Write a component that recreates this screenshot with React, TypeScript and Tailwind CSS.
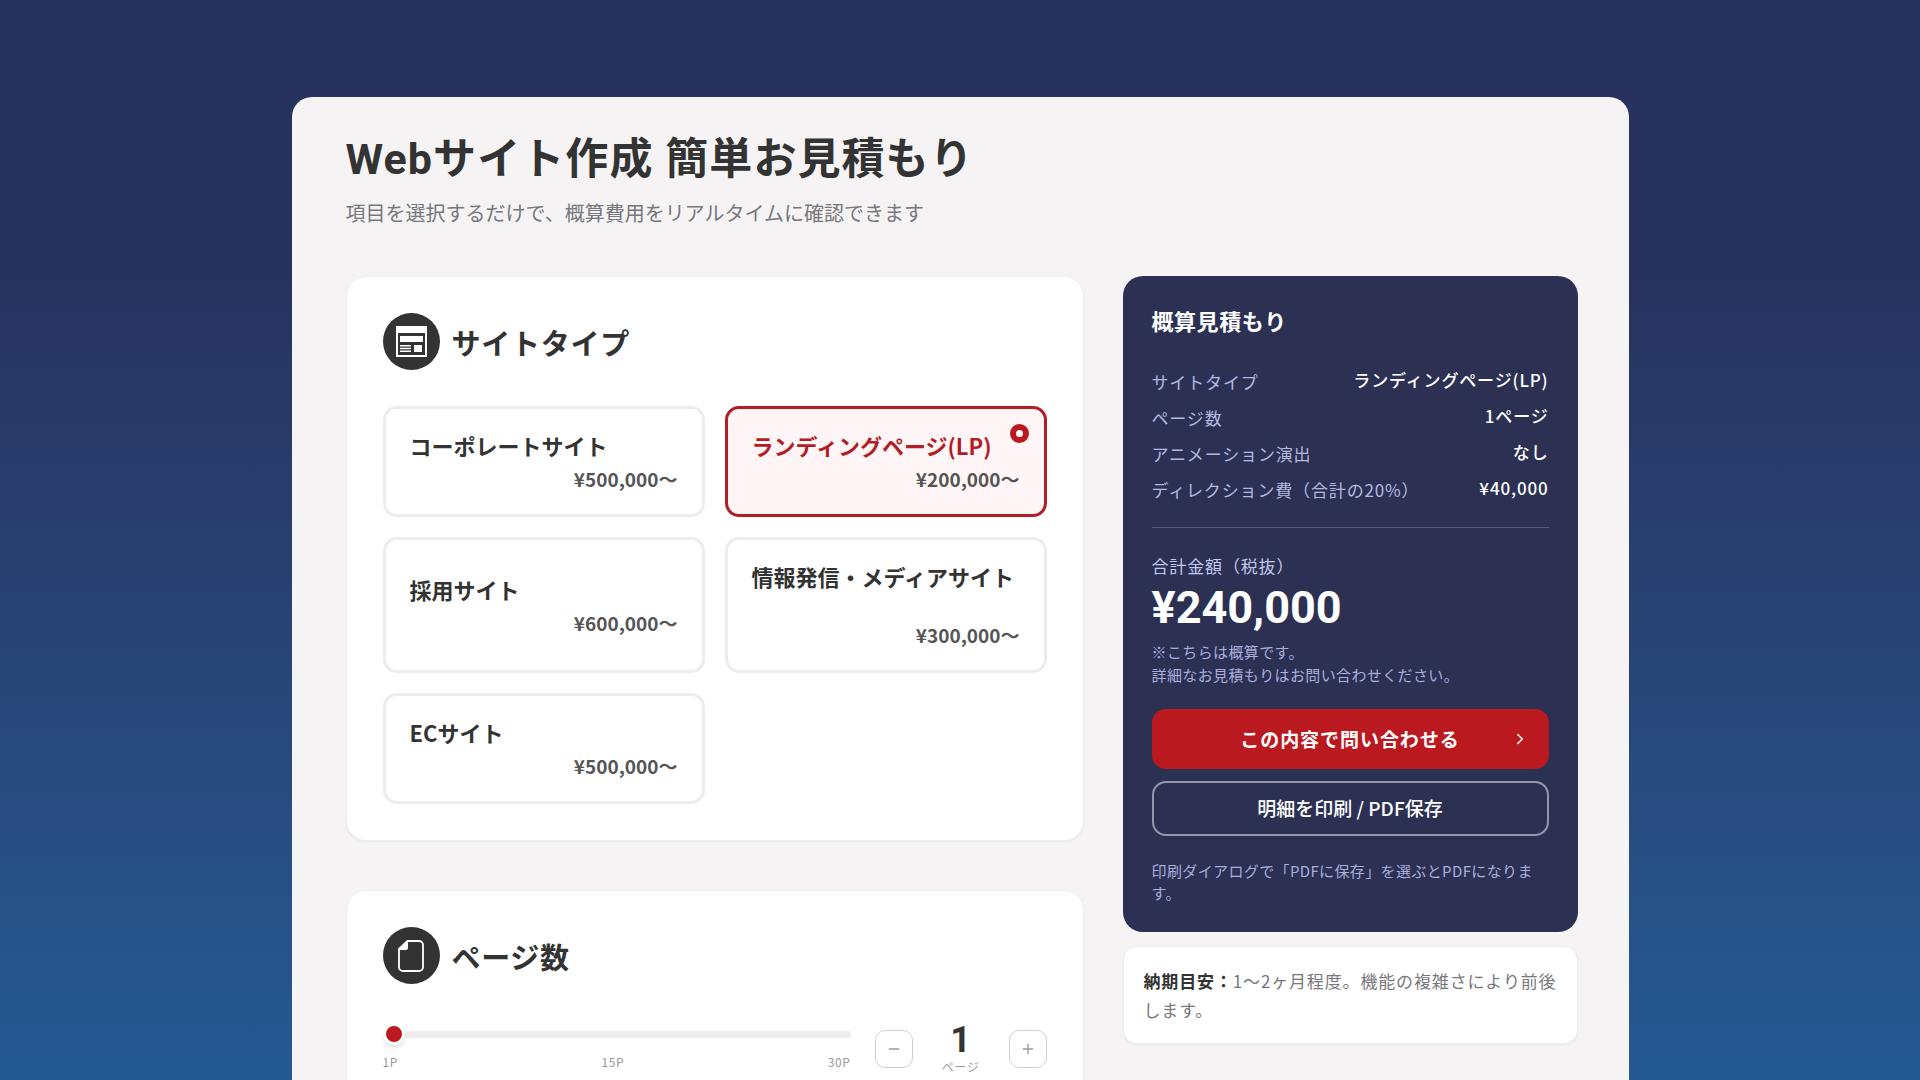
import React, { useState } from 'react';
import { ChevronRight, Minus, Plus } from 'lucide-react';

interface SiteType {
  id: string;
  name: string;
  price: number;
}

const siteTypes: SiteType[] = [
  { id: 'corporate', name: 'コーポレートサイト', price: 500000 },
  { id: 'lp', name: 'ランディングページ(LP)', price: 200000 },
  { id: 'recruit', name: '採用サイト', price: 600000 },
  { id: 'media', name: '情報発信・メディアサイト', price: 300000 },
  { id: 'ec', name: 'ECサイト', price: 500000 },
];

const PAGE_PRICE = 30000;
const MAX_PAGES = 30;

const yen = (value: number) => `¥${value.toLocaleString('en-US')}`;

const LayoutIcon = () => (
  <svg width="31" height="31" viewBox="0 0 31 31" aria-hidden="true">
    <path fill="#fff" d="M0 0h31v31H0z" />
    <path fill="#333" d="M2 7h27v22H2z" />
    <path fill="#fff" d="M4 10h23v6H4zM18 19h8v7h-8zM4 19h11v1.5H4zM4 21.8h11v1.5H4zM4 24.6h11v1.5H4z" />
  </svg>
);

const PageIcon = () => (
  <svg width="26" height="32" viewBox="0 0 26 32" fill="none" aria-hidden="true">
    <path
      stroke="#fff"
      strokeWidth="1.8"
      strokeLinejoin="round"
      d="M9.5 1H21a4 4 0 0 1 4 4v22a4 4 0 0 1-4 4H5a4 4 0 0 1-4-4V9z"
    />
    <path fill="#fff" d="M10 1v7a2 2 0 0 1-2 2H1z" />
  </svg>
);

interface SectionProps {
  title: string;
  icon: React.ReactNode;
  children: React.ReactNode;
}

const Section: React.FC<SectionProps> = ({ title, icon, children }) => (
  <section className="rounded-[20px] border border-[#efeeef] bg-white p-9 shadow-xs">
    <div className="mb-9 flex items-center gap-3">
      <span className="flex size-[57px] items-center justify-center rounded-full bg-[#333]">{icon}</span>
      <h2 className="text-[29px] leading-10 font-bold tracking-wide">{title}</h2>
    </div>
    {children}
  </section>
);

const App: React.FC = () => {
  const [selected, setSelected] = useState('lp');
  const [pages, setPages] = useState(1);

  const site = siteTypes.find((t) => t.id === selected) ?? siteTypes[0];
  const subtotal = site.price + (pages - 1) * PAGE_PRICE;
  const direction = subtotal * 0.2;

  const changePages = (next: number) => setPages(Math.min(MAX_PAGES, Math.max(1, next)));

  const rows = [
    { label: 'サイトタイプ', value: site.name },
    { label: 'ページ数', value: `${pages}ページ` },
    { label: 'アニメーション演出', value: 'なし' },
    { label: 'ディレクション費（合計の20%）', value: yen(direction) },
  ];

  return (
    <div className="h-screen overflow-hidden bg-linear-to-b from-[#28325e] from-25% to-[#245a93] px-8 pt-[97px] font-['Noto_Sans_CJK_JP',sans-serif] text-[#333]">
      <main className="mx-auto max-w-[1337px] rounded-t-[20px] bg-[#f5f3f4] pt-[34px] pr-[51px] pb-20 pl-[54px]">
        <header className="mb-[47px]">
          <h1 className="font-[Roboto,'Noto_Sans_CJK_JP',sans-serif] text-[43px] leading-[56px] font-bold tracking-wide">
            Webサイト作成 簡単お見積もり
          </h1>
          <p className="mt-[10px] text-xl leading-8 text-[#77777c]">
            項目を選択するだけで、概算費用をリアルタイムに確認できます
          </p>
        </header>

        <div className="grid grid-cols-[minmax(0,1fr)_455px] items-start gap-[39px]">
          <div className="flex flex-col gap-[49px]">
            <Section title="サイトタイプ" icon={<LayoutIcon />}>
              <div className="grid grid-cols-2 gap-5">
                {siteTypes.map((type) => {
                  const active = type.id === selected;
                  return (
                    <button
                      key={type.id}
                      type="button"
                      aria-pressed={active}
                      onClick={() => setSelected(type.id)}
                      className={`relative flex flex-col justify-center rounded-[14px] border-[3px] px-6 pt-5 pb-[18px] text-left font-bold ${
                        active ? 'border-[#b01e28] bg-[#fff5f6]' : 'border-[#ededed] bg-white'
                      }`}
                    >
                      <span className={`text-[22px] leading-[33px] ${active ? 'text-[#b01e28]' : ''}`}>
                        {type.name}
                      </span>
                      <span
                        className={`self-end text-[19px] leading-[34px] text-[#555] ${
                          type.id === 'media' ? 'mt-[25px]' : ''
                        }`}
                      >
                        {yen(type.price)}〜
                      </span>
                      {active && (
                        <span className="absolute top-[15px] right-[15px] size-[19px] rounded-full border-[6px] border-[#bb1920] bg-white" />
                      )}
                    </button>
                  );
                })}
              </div>
            </Section>

            <Section title="ページ数" icon={<PageIcon />}>
              <div className="flex items-start gap-6 pt-0.5">
                <div className="flex-1">
                  <div className="flex h-6 items-center">
                    <input
                      type="range"
                      min={1}
                      max={MAX_PAGES}
                      value={pages}
                      aria-label="ページ数"
                      onChange={(e) => changePages(Number(e.target.value))}
                      className="h-[7px] w-full appearance-none rounded-full bg-[#ededed] [&::-webkit-slider-thumb]:size-[22px] [&::-webkit-slider-thumb]:appearance-none [&::-webkit-slider-thumb]:rounded-full [&::-webkit-slider-thumb]:border-[3px] [&::-webkit-slider-thumb]:border-white [&::-webkit-slider-thumb]:bg-[#bb1920] [&::-webkit-slider-thumb]:shadow-md"
                    />
                  </div>
                  <div className="mt-1 flex justify-between text-xs leading-6 tracking-wider text-[#999]">
                    <span>1P</span>
                    <span>15P</span>
                    <span>30P</span>
                  </div>
                </div>
                <div className="flex items-center gap-6">
                  <button
                    type="button"
                    aria-label="減らす"
                    onClick={() => changePages(pages - 1)}
                    className="flex size-[38px] items-center justify-center rounded-[10px] border border-[#d0d0d0] text-[#999]"
                  >
                    <Minus size={16} strokeWidth={2} />
                  </button>
                  <div className="w-12 text-center">
                    <p className="font-[Roboto,sans-serif] text-[36px] leading-9 font-bold">{pages}</p>
                    <p className="text-xs leading-[18px] tracking-wider text-[#999]">ページ</p>
                  </div>
                  <button
                    type="button"
                    aria-label="増やす"
                    onClick={() => changePages(pages + 1)}
                    className="flex size-[38px] items-center justify-center rounded-[10px] border border-[#d0d0d0] text-[#999]"
                  >
                    <Plus size={16} strokeWidth={2} />
                  </button>
                </div>
              </div>
            </Section>
          </div>

          <aside className="flex flex-col gap-[14px]">
            <section className="rounded-[20px] bg-[#2c3154] px-[29px] pt-6 pb-7 text-white">
              <h2 className="text-[22px] leading-10 font-bold tracking-wide">概算見積もり</h2>
              <dl className="mt-7 flex flex-col gap-2 border-b border-[#545978] pb-[23px] text-[17px] tracking-wider">
                {rows.map((row) => (
                  <div key={row.label} className="flex items-start justify-between">
                    <dt className="leading-7 text-[#b4b9e0]">{row.label}</dt>
                    <dd className="leading-6 font-medium">{row.value}</dd>
                  </div>
                ))}
              </dl>
              <p className="mt-6 text-[17px] leading-7 tracking-wider text-[#c3c8ec]">合計金額（税抜）</p>
              <p className="font-[Roboto,sans-serif] text-[45px] leading-[56px] font-bold">{yen(subtotal + direction)}</p>
              <p className="mt-1 text-[15px] leading-[23px] tracking-wide text-[#a9aedb]">
                ※こちらは概算です。
                <br />
                詳細なお見積もりはお問い合わせください。
              </p>
              <button
                type="button"
                className="relative mt-[23px] h-[60px] w-full rounded-[14px] bg-[#bb1920] text-[19px] font-bold tracking-wider"
              >
                この内容で問い合わせる
                <ChevronRight size={18} className="absolute top-[21px] right-5" />
              </button>
              <button
                type="button"
                className="mt-3 h-[55px] w-full rounded-[14px] border-2 border-[#9297ac] text-[19px] font-medium"
              >
                明細を印刷 / PDF保存
              </button>
              <p className="mt-6 text-[15px] leading-[22px] tracking-wide text-[#a9aedb]">
                印刷ダイアログで「PDFに保存」を選ぶとPDFになります。
              </p>
            </section>
            <p className="rounded-[14px] border border-[#efeeef] bg-white py-[19px] pr-4 pl-5 text-[17px] leading-[29px] tracking-wider text-[#77777c] shadow-xs">
              <strong className="font-bold text-[#333]">納期目安：</strong>
              1〜2ヶ月程度。機能の複雑さにより前後します。
            </p>
          </aside>
        </div>
      </main>
    </div>
  );
};

export default App;
